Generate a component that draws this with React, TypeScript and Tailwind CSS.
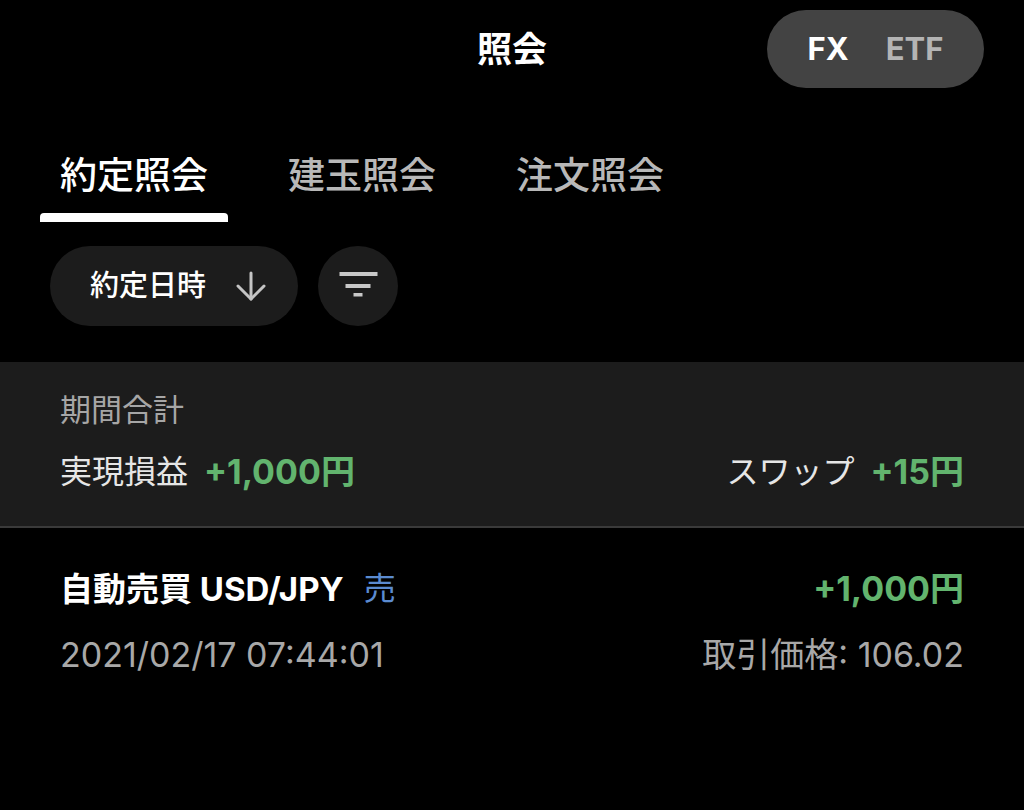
const font = "font-['Inter','Noto_Sans_CJK_JP',sans-serif]";

function Header() {
  return (
    <div className="relative flex h-[98px] items-start justify-end pt-[10px] pr-[40px]">
      <h1 className="absolute left-0 right-0 top-[10px] flex h-[78px] items-center justify-center text-[35px] font-bold text-white">
        照会
      </h1>
      <div className="relative flex h-[78px] w-[217px] items-center justify-center gap-[37px] rounded-full bg-[#434343] text-[31px] font-bold">
        <span className="text-white">FX</span>
        <span className="text-[#b4b4b4]">ETF</span>
      </div>
    </div>
  );
}

function Tabs() {
  const tabs = ["約定照会", "建玉照会", "注文照会"];
  return (
    <div className="mt-[40px] flex gap-10 pl-[40px]">
      {tabs.map((t, i) => (
        <div key={t} className="flex h-[84px] flex-col">
          <div
            className={
              "flex flex-1 items-center px-5 text-[37px] font-medium " +
              (i === 0 ? "text-white" : "text-[#b8b8b8]")
            }
          >
            {t}
          </div>
          <div className={"h-[9px] rounded-t-[4px] " + (i === 0 ? "bg-white" : "bg-transparent")} />
        </div>
      ))}
    </div>
  );
}

function SortRow() {
  return (
    <div className="mt-[24px] flex gap-5 pl-[50px]">
      <div className="flex h-[80px] w-[248px] items-center rounded-full bg-[#1c1c1c] pl-[40px]">
        <span className="text-[29px] font-medium text-white">約定日時</span>
        <svg className="ml-[29px]" width="32" height="30" viewBox="0 0 32 30" fill="none" stroke="#c4c4c4" strokeWidth="3" strokeLinecap="round" strokeLinejoin="round">
          <path d="M16 2v26" />
          <path d="M3 15l13 13 13-13" />
        </svg>
      </div>
      <div className="flex h-[80px] w-[80px] items-center justify-center rounded-full bg-[#1c1c1c]">
        <svg width="40" height="32" viewBox="0 0 40 32">
          <rect x="1.5" y="2" width="38" height="4" fill="#c8c8c8" />
          <rect x="7.5" y="14" width="25" height="4" fill="#c8c8c8" />
          <rect x="15.5" y="23" width="9" height="3.5" fill="#c8c8c8" />
        </svg>
      </div>
    </div>
  );
}

function Summary() {
  return (
    <div className="mt-[36px] h-[166px] border-b-2 border-[#3a3a3a] bg-[#1c1c1c] px-[60px] pt-[28px]">
      <div className="text-[31px] leading-[40px] text-[#a6a6a6]">期間合計</div>
      <div className="mt-[22px] flex items-center justify-between leading-[40px]">
        <div className="flex items-center gap-4">
          <span className="text-[32px] text-[#e6e6e6]">実現損益</span>
          <span className="text-[34px] font-bold text-[#62b46e]">+1,000円</span>
        </div>
        <div className="flex items-center gap-4">
          <span className="text-[32px] text-[#e6e6e6]">スワップ</span>
          <span className="text-[34px] font-bold text-[#62b46e]">+15円</span>
        </div>
      </div>
    </div>
  );
}

function TradeRow() {
  return (
    <div className="px-[60px] pt-[41px]">
      <div className="flex items-center justify-between leading-[40px]">
        <div className="flex items-center gap-5">
          <span className="text-[33px] font-bold text-white">自動売買 USD/JPY</span>
          <span className="text-[32px] text-[#5b8bd0]">売</span>
        </div>
        <span className="text-[34px] font-bold text-[#62b46e]">+1,000円</span>
      </div>
      <div className="mt-[26px] flex items-center justify-between text-[34px] leading-[40px] text-[#a8a8a8]">
        <span>2021/02/17 07:44:01</span>
        <span>取引価格: 106.02</span>
      </div>
    </div>
  );
}

export default function App() {
  return (
    <div className={"h-[810px] w-[1024px] overflow-hidden bg-black " + font}>
      <Header />
      <Tabs />
      <SortRow />
      <Summary />
      <TradeRow />
    </div>
  );
}
